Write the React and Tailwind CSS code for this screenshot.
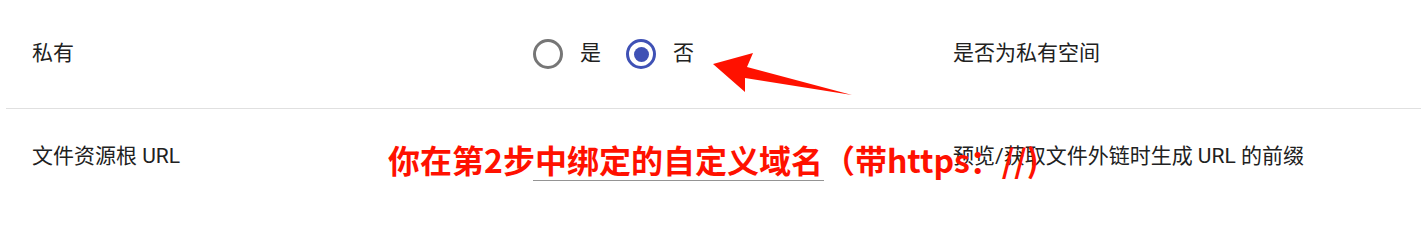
const font = { fontFamily: 'Roboto, "Noto Sans CJK SC", sans-serif' };

function Radio({ checked, label }) {
  return (
    <label className="flex items-center gap-[17px]">
      {checked ? (
        <span className="flex h-[30px] w-[30px] items-center justify-center rounded-full border-[3px] border-[#3f51b5]">
          <span className="h-[15px] w-[15px] rounded-full bg-[#3f51b5]" />
        </span>
      ) : (
        <span className="h-[30px] w-[30px] rounded-full border-[3px] border-[#767676]" />
      )}
      <span className="text-[21px] text-[#212121]">{label}</span>
    </label>
  );
}

export default function App() {
  return (
    <div className="relative h-[205px] w-[1421px] overflow-hidden bg-white text-[#212121]" style={font}>
      <div className="ml-[6px] grid h-[109px] grid-cols-[501px_420px_1fr] items-center border-b border-[#e0e0e0] pl-[26px]">
        <div className="text-[21px]">私有</div>
        <div className="flex items-center gap-[25px]">
          <Radio label="是" />
          <Radio checked label="否" />
        </div>
        <div className="text-[21px]">是否为私有空间</div>
      </div>

      <div className="ml-[6px] grid h-[96px] grid-cols-[501px_420px_1fr] items-center pl-[26px]">
        <div className="text-[21px]">文件资源根 URL</div>
        <div className="flex h-full items-end pb-[24px]">
          <div className="h-px w-[291px] bg-[#949494]" />
        </div>
        <div className="text-[21px]">预览/获取文件外链时生成 URL 的前缀</div>
      </div>

      {/* annotation arrow */}
      <svg className="absolute left-[705px] top-[45px]" width="160" height="60" viewBox="705 45 160 60">
        <polygon points="713,64 753,53 747,67 852,95 745,78 745,92" fill="#ff1100" />
      </svg>

      {/* annotation text */}
      <div
        className="absolute left-[388px] top-[143px] whitespace-nowrap text-[32px] font-bold leading-none text-[#ff1100]"
        style={{ fontFamily: '"Noto Sans CJK SC", sans-serif' }}
      >
        你在第2步中绑定的自定义域名（带https：//)
      </div>
    </div>
  );
}
